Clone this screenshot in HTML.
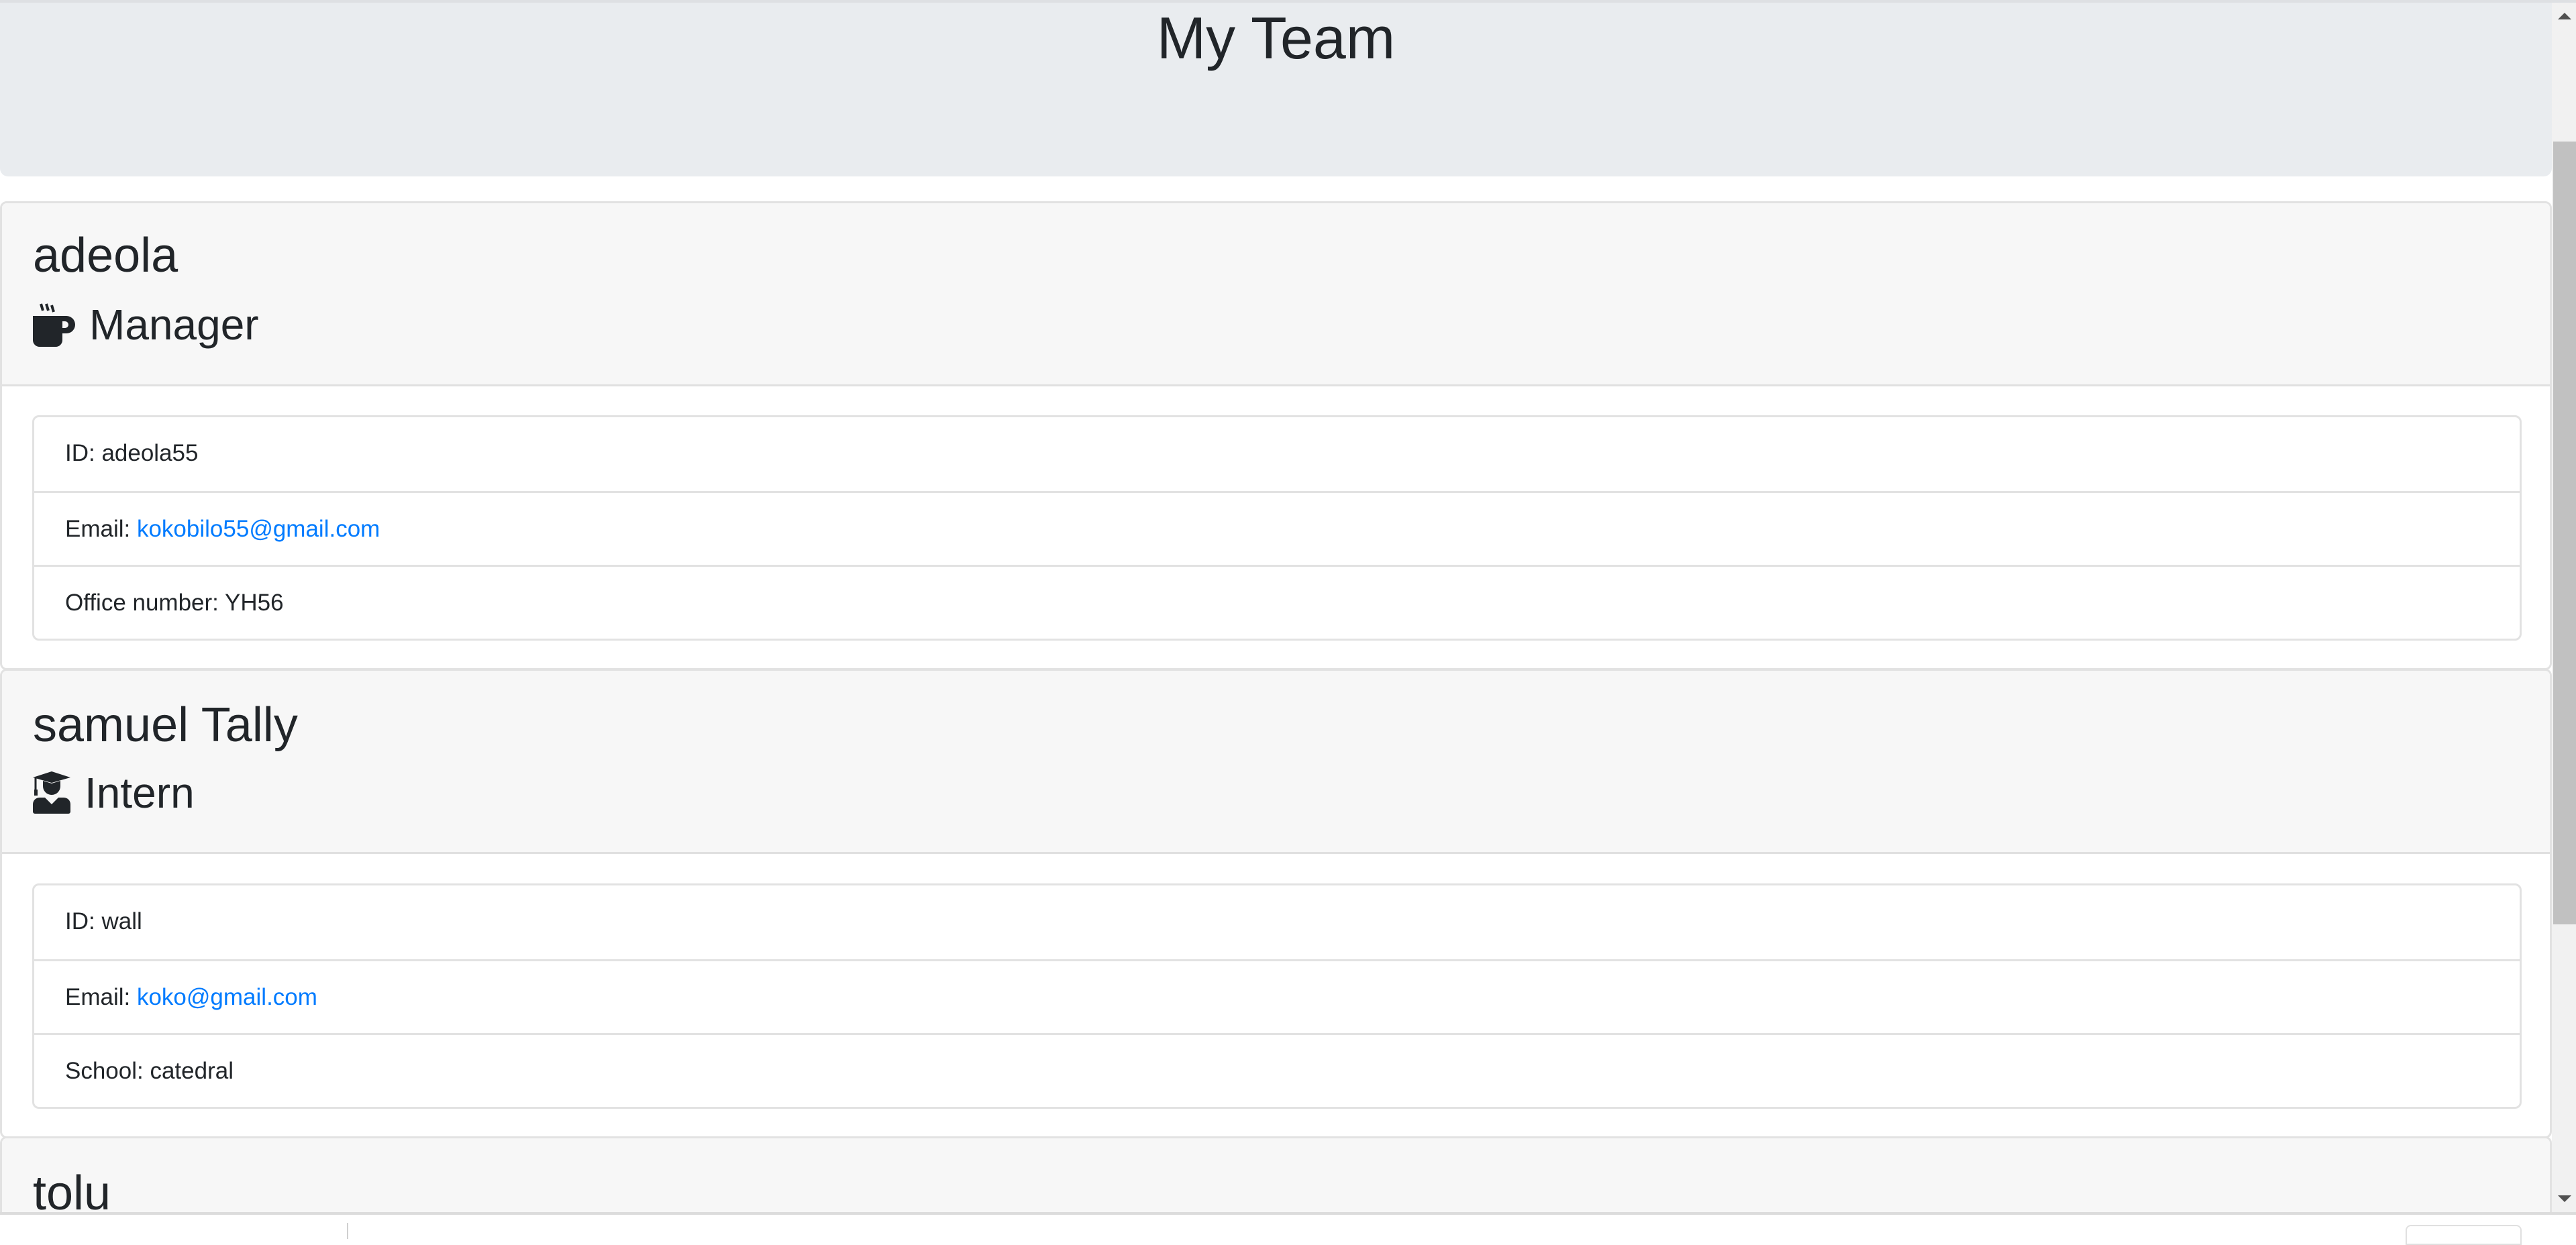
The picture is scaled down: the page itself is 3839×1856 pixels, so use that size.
<!DOCTYPE html>
<html><head><meta charset="utf-8"><style>
*{box-sizing:border-box;margin:0;padding:0}
body{width:3839px;height:1847px;overflow:hidden;background:#fff;font-family:"Liberation Sans",sans-serif;color:#212529;position:relative}
.abs{position:absolute}
.jumbo{left:0;top:4px;width:3803px;height:259px;background:#e9ecef;border-radius:0 0 12px 12px}
.topline{left:0;top:0;width:3839px;height:4px;background:#dee0e3}
h1{position:absolute;left:0;width:3803px;text-align:center;top:0px;font-size:88px;font-weight:500;line-height:106px}
.card{left:0;width:3803px;border:3px solid #e2e2e2;border-radius:10px;background:#fff;overflow:hidden}
.hdr{position:absolute;left:0;right:0;top:0;background:#f7f7f7;border-bottom:3px solid #e0e0e0}
.name{position:absolute;left:46px;font-size:72px;font-weight:500;line-height:1}
.role{position:absolute;left:46px;font-size:64px;font-weight:500;line-height:1;display:flex;align-items:center}
.list{position:absolute;left:45px;width:3710px;border:3px solid #e2e2e2;border-radius:10px}
.item{height:110px;border-top:3px solid #e2e2e2;font-size:35px;line-height:107px;padding-left:46px}
.item:first-child{border-top:none}
a{color:#007bff;text-decoration:none}
.sb{left:3803px;top:4px;width:36px;height:1803px;background:#f1f1f1}
.thumb{left:3805px;top:211px;width:34px;height:1167px;background:#c1c1c1}
</style></head><body>
<div class="abs topline"></div>
<div class="abs jumbo"><h1>My Team</h1></div>

<div class="abs card" style="top:300px;height:699px">
  <div class="hdr" style="height:273px">
    <div class="name" style="top:42px">adeola</div>
    <div class="role" style="top:148px">
      <svg width="64" height="66" viewBox="0 0 64 66"><path d="M12 2l3 10M20 2l3 10M28 4l3 10" stroke="#212529" stroke-width="4" fill="none"/><path d="M0 20h50a13 13 0 0 1 0 26h-6v10a10 10 0 0 1-10 10H10A10 10 0 0 1 0 56z" fill="#212529"/><path d="M44 28h4a5 5 0 0 1 0 10h-4z" fill="#f7f7f7"/></svg>
      <span style="margin-left:20px">Manager</span>
    </div>
  </div>
  <div class="list" style="top:316px">
    <div class="item">ID: adeola55</div>
    <div class="item">Email: <a>kokobilo55@gmail.com</a></div>
    <div class="item">Office number: YH56</div>
  </div>
</div>

<div class="abs card" style="top:997px;height:700px">
  <div class="hdr" style="height:273px">
    <div class="name" style="top:45px">samuel Tally</div>
    <div class="role" style="top:150px">
      <svg width="57" height="64" viewBox="0 0 57 64"><path d="M0 9L28 0l28 9-28 8z" fill="#212529"/><path d="M4 10v18" stroke="#212529" stroke-width="3"/><rect x="2" y="27" width="5" height="9" fill="#212529"/><path d="M15 14v8a13 13 0 0 0 26 0v-8l-13 4z" fill="#212529"/><path d="M10 39h8l10 10 10-10h8a10 10 0 0 1 10 10v11a3 3 0 0 1-3 3H3a3 3 0 0 1-3-3V49a10 10 0 0 1 10-10z" fill="#212529"/></svg>
      <span style="margin-left:20px">Intern</span>
    </div>
  </div>
  <div class="list" style="top:317px">
    <div class="item">ID: wall</div>
    <div class="item">Email: <a>koko@gmail.com</a></div>
    <div class="item">School: catedral</div>
  </div>
</div>

<div class="abs card" style="top:1694px;height:120px;border-radius:10px 10px 0 0">
  <div class="hdr" style="height:200px;border:none">
    <div class="name" style="top:46px">tolu</div>
  </div>
</div>
<div class="abs" style="left:0;top:1807px;width:3839px;height:4px;background:#dcdcdc"></div>
<div class="abs" style="left:0;top:1811px;width:3839px;height:36px;background:#fff"></div>
<div class="abs" style="left:517px;top:1823px;width:2px;height:24px;background:#d0d0d0"></div>
<div class="abs" style="left:3585px;top:1826px;width:173px;height:30px;border:2px solid #e0e0e0;border-radius:8px 8px 0 0"></div>

<div class="abs sb"></div>
<div class="abs thumb"></div>
<svg class="abs" style="left:3812px;top:19px" width="20" height="12"><path d="M0 10L10 0l10 10z" fill="#505050"/></svg>
<svg class="abs" style="left:3812px;top:1782px" width="20" height="12"><path d="M0 0h20L10 10z" fill="#505050"/></svg>
</body></html>
